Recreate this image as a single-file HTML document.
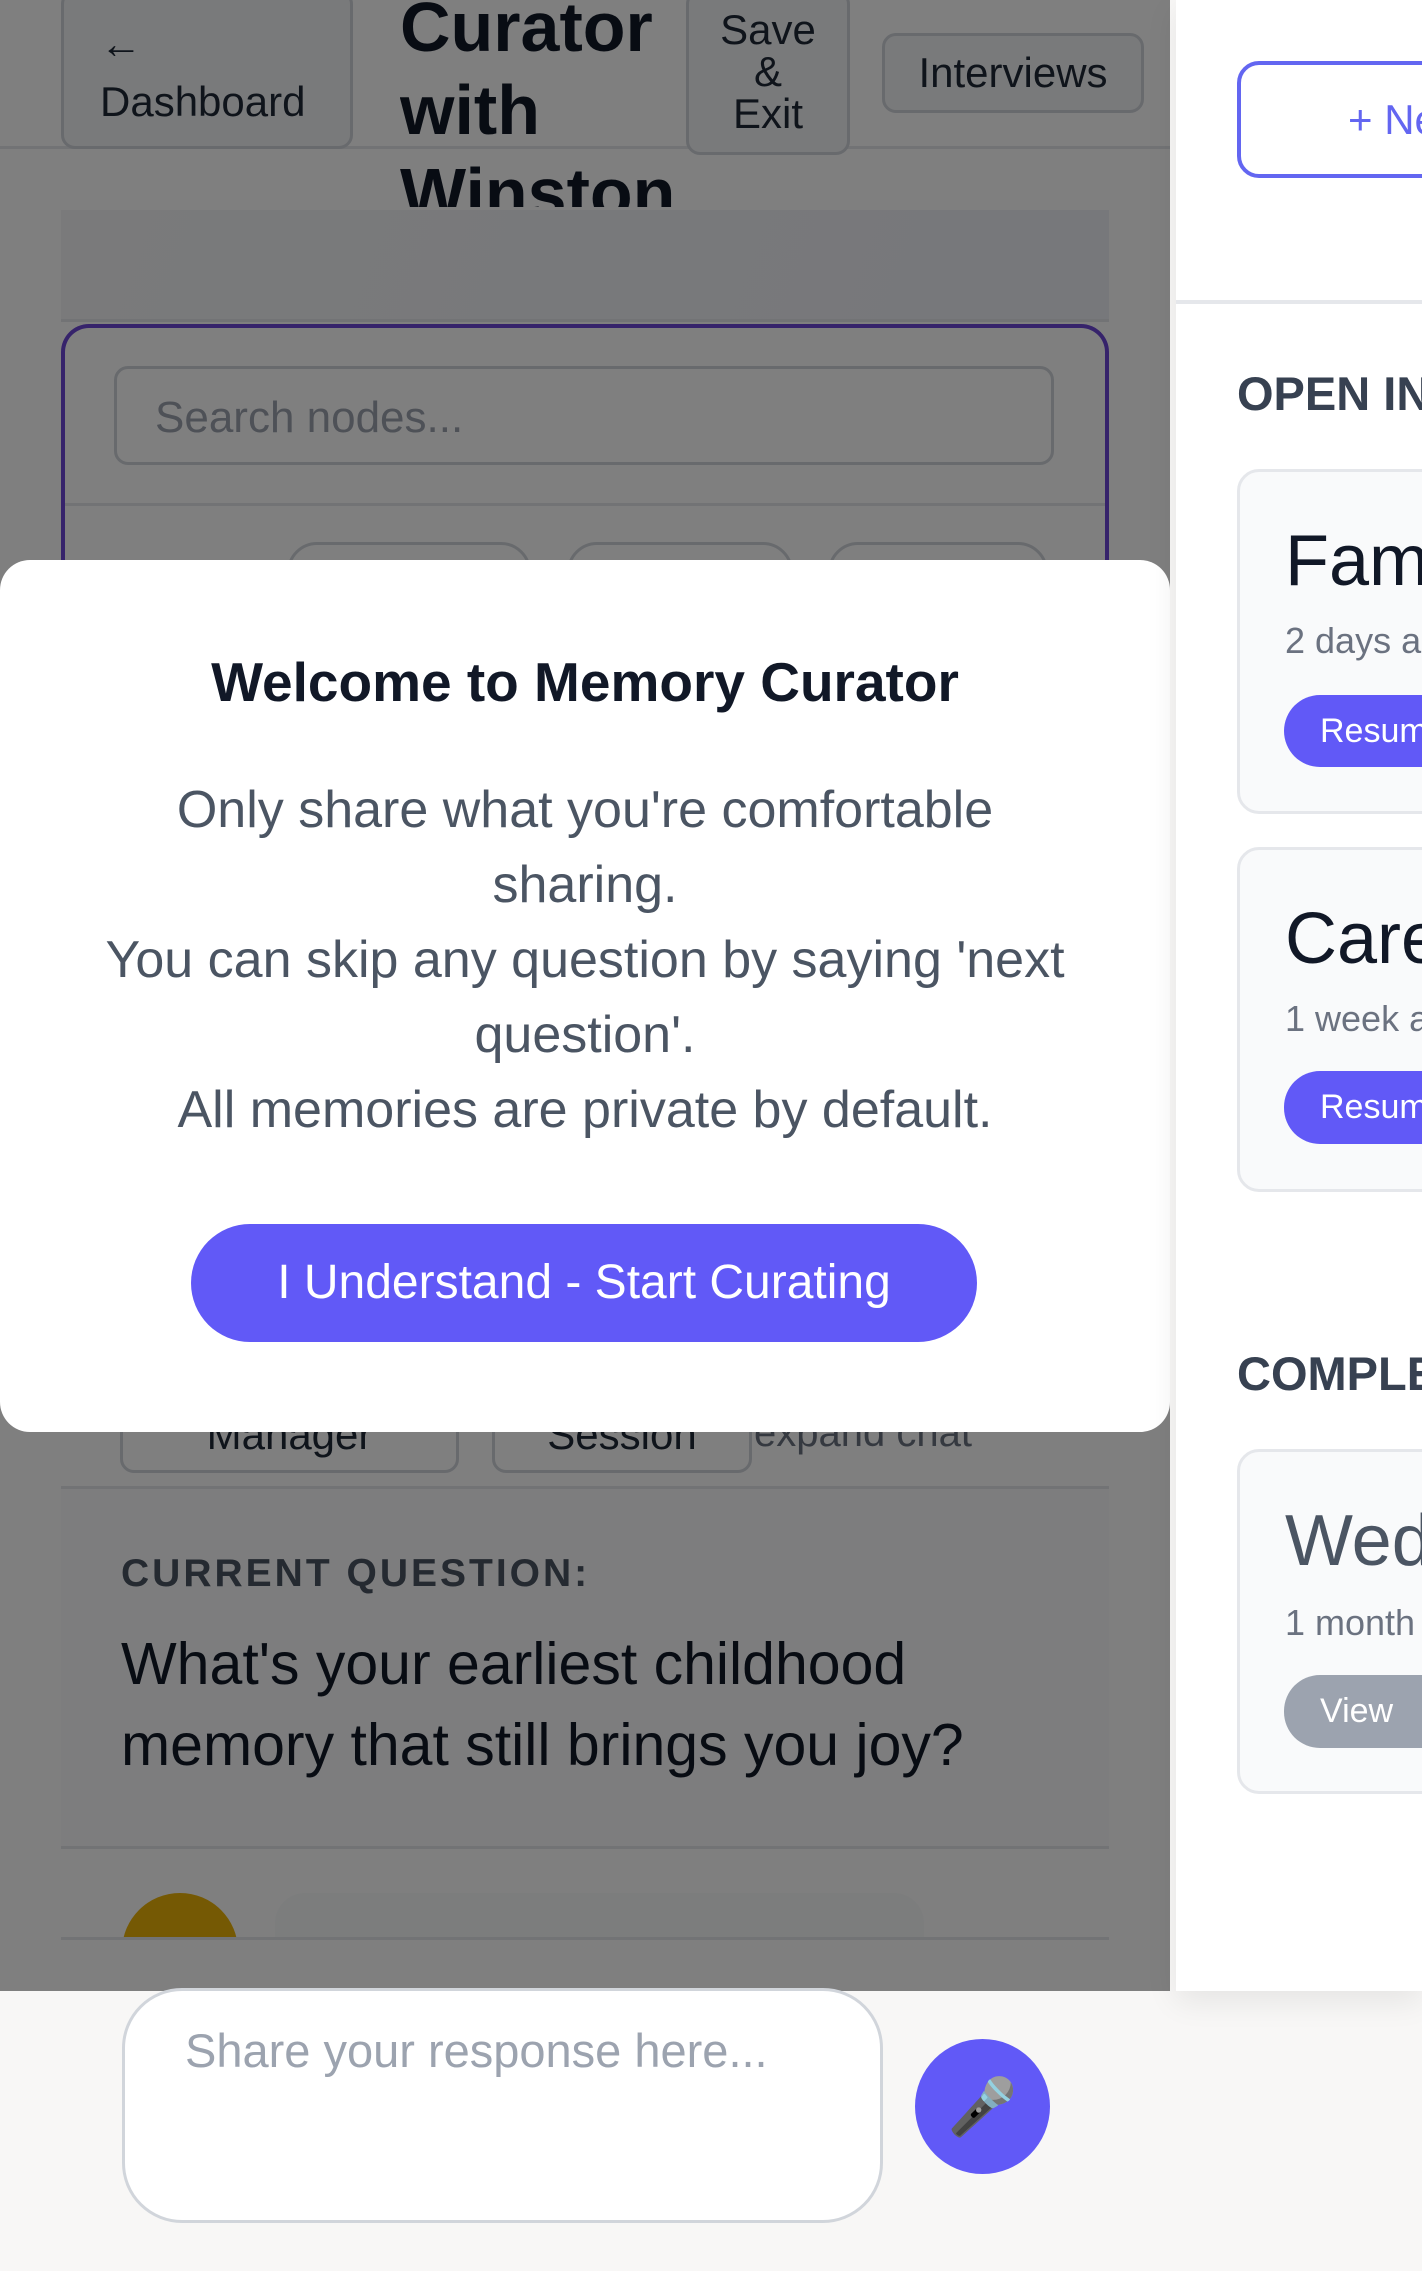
<!DOCTYPE html>
<html><head><meta charset="utf-8"><style>
*{box-sizing:border-box;margin:0;padding:0}
body{width:1422px;height:2271px;overflow:hidden;background:#f8f7f6;font-family:"Liberation Sans","DejaVu Sans",sans-serif;position:relative}
.a{position:absolute}
.btn{position:absolute;border:3px solid #d1d5db;border-radius:14px;background:#fff;color:#1f2937;font-size:42px;text-align:center}
</style></head><body>
<!-- left panel -->
<div class="a" style="left:0;top:0;width:1170px;height:1991px;background:#fff;overflow:hidden">
  <div class="a" style="left:0;top:146px;width:1170px;height:3px;background:#e5e7eb"></div>
  <div class="btn" style="left:61px;top:-10px;width:292px;height:159px;text-align:left;padding:22px 0 0 36px;line-height:58px;background:#f3f4f6">←<br>Dashboard</div>
  <div class="a" style="left:400px;top:-14px;width:290px;height:221px;overflow:hidden;font-size:70px;font-weight:bold;line-height:83px;color:#111827">Curator<br>with<br>Winston</div>
  <div class="btn" style="left:686px;top:-10px;width:164px;height:165px;padding-top:16px;line-height:42px;background:#f3f4f6">Save<br>&amp;<br>Exit</div>
  <div class="btn" style="left:882px;top:33px;width:262px;height:80px;line-height:74px;background:#f3f4f6">Interviews</div>
  <div class="a" style="left:61px;top:210px;width:1048px;height:109px;background:linear-gradient(110deg,#f4f5f7,#eef0f6)"></div>
  <div class="a" style="left:61px;top:319px;width:1048px;height:3px;background:#e5e7eb"></div>
  <div class="a" style="left:61px;top:324px;width:1048px;height:700px;border:4px solid #6d46d6;border-radius:28px;border-bottom:none"></div>
  <div class="a" style="left:114px;top:366px;width:940px;height:99px;border:3px solid #d1d5db;border-radius:14px;background:#fff;font-size:44px;color:#9ca3af;padding:24px 0 0 38px">Search nodes...</div>
  <div class="a" style="left:65px;top:503px;width:1040px;height:3px;background:#e5e7eb"></div>
  <div class="a" style="left:287px;top:542px;width:244px;height:60px;border:3px solid #d1d5db;border-radius:30px"></div>
  <div class="a" style="left:567px;top:542px;width:226px;height:60px;border:3px solid #d1d5db;border-radius:30px"></div>
  <div class="a" style="left:828px;top:542px;width:220px;height:60px;border:3px solid #d1d5db;border-radius:30px"></div>
  <div class="btn" style="left:120px;top:1380px;width:339px;height:93px;font-size:42px;line-height:104px;overflow:hidden">Manager</div>
  <div class="btn" style="left:492px;top:1380px;width:260px;height:93px;font-size:42px;line-height:104px;overflow:hidden">Session</div>
  <div class="a" style="left:754px;top:1408px;font-size:40px;color:#6b7280;line-height:50px">expand chat</div>
  <div class="a" style="left:61px;top:1486px;width:1048px;height:3px;background:#e5e7eb"></div>
  <div class="a" style="left:61px;top:1489px;width:1048px;height:357px;background:#fafbfc"></div>
  <div class="a" style="left:121px;top:1552px;font-size:39px;font-weight:bold;letter-spacing:3px;color:#4b5563">CURRENT QUESTION:</div>
  <div class="a" style="left:121px;top:1624px;width:1000px;font-size:59px;line-height:81px;color:#111827">What's your earliest childhood<br>memory that still brings you joy?</div>
  <div class="a" style="left:61px;top:1846px;width:1048px;height:3px;background:#e5e7eb"></div>
  <div class="a" style="left:61px;top:1849px;width:1048px;height:88px;overflow:hidden">
    <div class="a" style="left:61px;top:44px;width:116px;height:116px;border-radius:50%;background:#eab308"></div>
    <div class="a" style="left:214px;top:44px;width:649px;height:100px;border-radius:30px;background:#f9fafb"></div>
  </div>
  <div class="a" style="left:61px;top:1937px;width:1048px;height:3px;background:#e5e7eb"></div>
  <div class="a" style="left:0;top:0;width:1170px;height:1991px;background:rgba(0,0,0,0.5)"></div>
  <!-- modal -->
  <div class="a" style="left:0;top:560px;width:1170px;height:872px;background:#fff;border-radius:30px;text-align:center">
    <div style="margin-top:90px;font-size:55px;font-weight:bold;color:#111827;line-height:64px">Welcome to Memory Curator</div>
    <div style="margin-top:59px;font-size:52px;line-height:75px;color:#4b5563">Only share what you're comfortable<br>sharing.<br>You can skip any question by saying 'next<br>question'.<br>All memories are private by default.</div>
    <div class="a" style="left:191px;top:664px;width:786px;height:118px;border-radius:59px;background:#6159f7;color:#fff;font-size:48px;line-height:118px">I Understand - Start Curating</div>
  </div>
</div>
<!-- right panel -->
<div class="a" style="left:1176px;top:0;width:246px;height:1991px;background:#fff;overflow:hidden;box-shadow:0 10px 30px rgba(0,0,0,0.08)">
  <div class="a" style="left:61px;top:61px;width:300px;height:117px;border:4px solid #6366f1;border-radius:22px;color:#6366f1;font-size:42px;line-height:109px;padding-left:107px;white-space:nowrap">+ New</div>
  <div class="a" style="left:0;top:300px;width:246px;height:4px;background:#e5e7eb"></div>
  <div class="a" style="left:61px;top:366px;font-size:47px;font-weight:bold;color:#374151;white-space:nowrap">OPEN INTERVIEWS</div>
  <div class="a" style="left:61px;top:469px;width:300px;height:345px;border:3px solid #e5e7eb;border-radius:22px;background:#f9fafb">
    <div class="a" style="left:45px;top:48px;font-size:72px;color:#111827;white-space:nowrap">Family</div>
    <div class="a" style="left:45px;top:148px;font-size:36px;color:#6b7280;white-space:nowrap">2 days ago</div>
    <div class="a" style="left:44px;top:223px;width:200px;height:72px;border-radius:36px;background:#6159f7;color:#fff;font-size:34px;line-height:72px;padding-left:36px">Resume</div>
  </div>
  <div class="a" style="left:61px;top:847px;width:300px;height:345px;border:3px solid #e5e7eb;border-radius:22px;background:#f9fafb">
    <div class="a" style="left:45px;top:48px;font-size:72px;color:#111827;white-space:nowrap">Career</div>
    <div class="a" style="left:45px;top:148px;font-size:36px;color:#6b7280;white-space:nowrap">1 week ago</div>
    <div class="a" style="left:44px;top:221px;width:200px;height:73px;border-radius:36px;background:#6159f7;color:#fff;font-size:34px;line-height:73px;padding-left:36px">Resume</div>
  </div>
  <div class="a" style="left:61px;top:1346px;font-size:47px;font-weight:bold;color:#374151;white-space:nowrap">COMPLETED</div>
  <div class="a" style="left:61px;top:1449px;width:300px;height:345px;border:3px solid #e5e7eb;border-radius:22px;background:#f9fafb">
    <div class="a" style="left:45px;top:48px;font-size:72px;color:#4b5563;white-space:nowrap">Wedding</div>
    <div class="a" style="left:45px;top:150px;font-size:36px;color:#6b7280;white-space:nowrap">1 month ago</div>
    <div class="a" style="left:44px;top:223px;width:200px;height:73px;border-radius:36px;background:#9ca3af;color:#fff;font-size:34px;line-height:73px;padding-left:36px">View</div>
  </div>
</div>
<!-- bottom input -->
<div class="a" style="left:122px;top:1988px;width:761px;height:235px;border:3px solid #d1d5db;border-radius:60px;background:#fff;font-size:47px;color:#9ca3af;padding:32px 0 0 60px">Share your response here...</div>
<div class="a" style="left:915px;top:2039px;width:135px;height:135px;border-radius:50%;background:#6159f7;text-align:center;line-height:135px;font-size:56px">🎤</div>
</body></html>
